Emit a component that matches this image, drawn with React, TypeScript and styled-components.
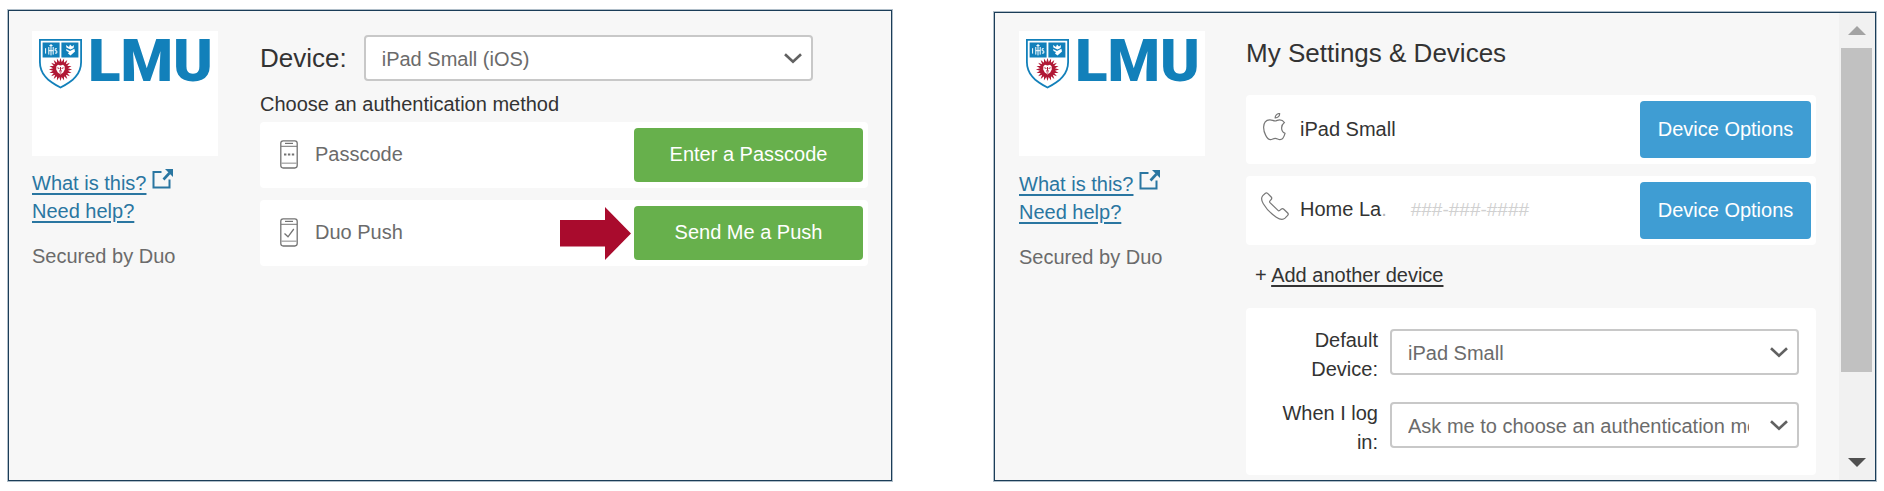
import React from "react";
import styled, { createGlobalStyle } from "styled-components";

const GlobalStyle = createGlobalStyle`
  *, *::before, *::after { box-sizing: border-box; }
  body {
    margin: 0;
    background: #fff;
    color: #333;
    font: 20px/28px "Liberation Sans", Arial, sans-serif;
  }
`;

const Page = styled.main`
  display: grid;
  grid-template-columns: minmax(0, 442fr) minmax(0, 441fr);
  gap: 102px;
  padding: 10px 8px;
`;

const Panel = styled.section<{ $lower?: boolean }>`
  display: flex;
  margin-top: ${(p) => (p.$lower ? 2 : 0)}px;
  border: 1px solid #1b3d58;
  box-shadow: 0 0 0 1px #b0bec9;
  background: #f7f7f7;
`;

const Body = styled.div<{ $inset: number; $gap: number; $top: number }>`
  flex: 1;
  min-width: 0;
  display: flex;
  gap: ${(p) => p.$gap}px;
  padding: ${(p) => p.$top}px 23px 5px ${(p) => p.$inset}px;
`;

const Sidebar = styled.aside`
  flex: none;
  width: 186px;
  display: flex;
  flex-direction: column;
  color: #6b6b6b;
`;

const LogoCard = styled.div`
  display: flex;
  align-items: flex-start;
  gap: 6px;
  height: 125px;
  padding: 8px 7px;
  background: #fff;
  > svg { flex: none; }
`;

const Wordmark = styled.span`
  color: #1280ba;
  font: 900 60px/44px Roboto, sans-serif;
`;

const HelpLinks = styled.nav<{ $space: number }>`
  display: flex;
  flex-direction: column;
  align-items: flex-start;
  margin: ${(p) => p.$space}px 0 17px;
`;

const HelpLink = styled.a`
  display: flex;
  gap: 6px;
  color: #2a76a1;
  text-underline-offset: 3px;
`;

const Content = styled.div<{ $top: number }>`
  flex: 1;
  min-width: 0;
  padding-top: ${(p) => p.$top}px;
`;

const DeviceBar = styled.div`
  display: flex;
  align-items: center;
  gap: 17px;
  padding-right: 55px;
`;

const DeviceLabel = styled.label`
  font-size: 26px;
  line-height: 32px;
`;

const SelectBox = styled.span`
  flex: 1;
  min-width: 0;
  display: grid;
  align-items: center;
  > * { grid-area: 1 / 1; }
  > svg {
    justify-self: end;
    margin-right: 11px;
    pointer-events: none;
  }
`;

const SelectInput = styled.select`
  appearance: none;
  width: 100%;
  height: 46px;
  padding: 2px 48px 0 16px;
  border: 2px solid #c8c8c8;
  border-radius: 4px;
  background: #fff;
  color: #6b6b6b;
  font: inherit;
`;

const Prompt = styled.h2`
  margin: 9px 0 4px;
  font: inherit;
`;

const Heading = styled.h1`
  margin: 0 0 26px;
  font-size: 26px;
  font-weight: 400;
  line-height: 32px;
`;

const Rows = styled.ul`
  display: flex;
  flex-direction: column;
  gap: 12px;
  margin: 0;
  padding: 0;
  list-style: none;
`;

const Row = styled.li<{ $kind: "method" | "device" }>`
  display: flex;
  align-items: center;
  gap: ${(p) => (p.$kind === "method" ? 17 : 11)}px;
  padding: 6px 5px 6px ${(p) => (p.$kind === "method" ? 20 : 15)}px;
  border-radius: 4px;
  background: #fff;
  color: ${(p) => (p.$kind === "method" ? "#6b6b6b" : "#333")};
  > svg { flex: none; }
`;

const RowName = styled.span`
  flex: 1;
  padding-bottom: 2px;
`;

const Masked = styled.span`
  margin-left: 24px;
  color: #d0d0d0;
  font-size: 19px;
`;

const Faint = styled.span`
  color: #b4b4b4;
`;

const ActionButton = styled.button<{ $tone: "green" | "blue" }>`
  width: ${(p) => (p.$tone === "green" ? 229 : 171)}px;
  height: ${(p) => (p.$tone === "green" ? 54 : 57)}px;
  padding: 0 0 2px;
  border: 0;
  border-radius: 4px;
  background: ${(p) => (p.$tone === "green" ? "#67b04c" : "#3f9dd3")};
  color: #fff;
  font: inherit;
`;

const PointerSlot = styled.span`
  display: flex;
  margin-right: -14px;
`;

const AddDevice = styled.p`
  margin: 16px 0 19px;
  padding-left: 9px;
`;

const AddLink = styled.a`
  color: inherit;
  text-underline-offset: 3px;
`;

const SettingsCard = styled.form`
  display: flex;
  flex-direction: column;
  gap: 15px;
  padding: 18px 17px 18px 20px;
  border-radius: 4px;
  background: #fff;
`;

const Field = styled.div`
  display: flex;
  align-items: flex-start;
  gap: 12px;
  > span { margin-top: 3px; }
`;

const FieldLabel = styled.label`
  flex: none;
  width: 112px;
  line-height: 29px;
  text-align: right;
`;

const Scrollbar = styled.div`
  flex: none;
  width: 36px;
  display: flex;
  flex-direction: column;
  background: #f1f1f1;
`;

const ScrollButton = styled.button`
  display: flex;
  align-items: center;
  justify-content: center;
  height: 35px;
  padding: 0;
  border: 0;
  background: none;
`;

const Track = styled.div`
  flex: 1;
  display: grid;
  grid-template-rows: 324fr 73fr;
  padding: 0 3px 0 2px;
`;

const Thumb = styled.div`
  background: #c1c1c1;
`;

const sunRays = Array.from({ length: 40 }, (_, i) => {
  const r = i % 2 ? 7.6 : 11.6;
  const a = (i * Math.PI) / 20;
  return `${(21.5 + r * Math.sin(a)).toFixed(2)},${(30.5 - r * Math.cos(a)).toFixed(2)}`;
}).join(" ");

function Shield() {
  return (
    <svg width="43" height="50" viewBox="0 0 43 50" aria-hidden="true">
      <path d="M0 0H43V23C43 35 35 43 21.5 49.5C8 43 0 35 0 23Z" fill="#1280ba" />
      <path d="M1.8 1.8H41.2V23C41.2 34 34 41.3 21.5 47.4C9 41.3 1.8 34 1.8 23Z" fill="#fff" />
      <path d="M3.6 3.6H20.6V18.4H3.6ZM22.4 3.6H39.4V18.4H22.4Z" fill="#1280ba" />
      <path
        d="M6.6 9.2V14.6M9.8 8V15.6M14.2 8V15.6M9.8 11.7H14.2M12 5V16.4M10.4 6.6H13.6M17.8 9.7H16.2V11.8H17.8V14.1H16"
        fill="none"
        stroke="#fff"
        strokeWidth="1"
      />
      <path
        d="M27 6L30 8L31 5.4L33 7.4L35 6L34.6 9L31.5 10.4L27.4 8.6ZM27 10L31 12L35.4 9.8L36 12.6L31.5 16.4L29 14.6L30 13L27.6 12Z"
        fill="#fff"
      />
      <polygon points={sunRays} fill="#b01835" />
      <path
        d="M17.4 27.2L19 25.8L21.5 26.6L24 25.8L25.6 27.2L25.8 30.4L24.2 33.6L21.5 35.4L18.8 33.6L17.200 30.4Z"
        fill="#fff"
      />
      <path
        d="M18.4 28.8L20.4 29.5M24.6 28.8L22.6 29.5M21.5 28V31.6M20 32H23M20.6 34H22.4"
        fill="none"
        stroke="#b01835"
        strokeWidth="1"
      />
    </svg>
  );
}

function ExternalIcon() {
  return (
    <svg width="21" height="20" viewBox="0 0 21 20" aria-hidden="true">
      <path d="M9.5 3H1.5V18.5H17.5V10.5" fill="none" stroke="currentColor" strokeWidth="2" />
      <path d="M11.5 10.5L17.5 4" fill="none" stroke="currentColor" strokeWidth="2.6" />
      <path d="M13 0H21V8Z" fill="currentColor" />
    </svg>
  );
}

function Chevron() {
  return (
    <svg width="18" height="11" viewBox="0 0 18 11" aria-hidden="true">
      <path d="M1 1.2L9 8.8L17 1.2" fill="none" stroke="#616161" strokeWidth="2.6" />
    </svg>
  );
}

function PhoneIcon({ checked }: { checked?: boolean }) {
  return (
    <svg width="18" height="31" viewBox="0 0 18 31" fill="none" stroke="#737373" aria-hidden="true">
      <rect x="0.8" y="0.8" width="16.4" height="27.2" rx="2.4" strokeWidth="1.3" />
      <path d="M1 6.3H17" />
      <path d="M1 23.2H17" stroke="#aaa" strokeWidth="1.4" />
      <path d="M5 3.4H13" strokeWidth="1.2" />
      {checked ? (
        <path d="M4.5 15.5L8 18.8L13.8 11" strokeWidth="1.3" />
      ) : (
        <path d="M4 14.5H6.4M7.9 14.5H10.3M11.8 14.5H14.2" strokeWidth="2.2" />
      )}
    </svg>
  );
}

function AppleIcon() {
  return (
    <svg width="28" height="34" viewBox="0 0 28 34" fill="none" stroke="#777" strokeWidth="1.2" aria-hidden="true">
      <path d="M14 8C12 7.700 10.500 6.800 8.500 6.800C5 6.800 2.600 10 2.600 14.200C2.600 19.500 6 26.600 9.400 26.600C11.400 26.600 12.200 25.300 14.200 25.300C16.200 25.300 17 26.600 19 26.600C21.200 26.600 23.200 23.400 24 20.300C21.800 19.300 20.600 17.400 20.600 14.900C20.600 12.500 21.800 10.700 23.400 9.500C22.200 7.700 20.400 6.800 18.600 6.800C16.800 6.800 15.600 8 14 8Z" />
      <path d="M14.200 5C14 2.400 16 .6 18.600 .5C18.800 3 17 5 14.200 5Z" />
    </svg>
  );
}

function HandsetIcon() {
  return (
    <svg width="28" height="38" viewBox="0 0 28 38" fill="none" stroke="#777" strokeWidth="1.2" aria-hidden="true">
      <path d="M1.800 3.600L4.400 1.200Q5.500 .4 6.600 1.400L10.200 5Q11.400 6.400 10 7.700L8.700 9.200Q8.400 10 9 10.700L17 18.400Q17.700 19.100 18.500 18.600L20.400 17Q21.600 16.100 22.800 17.200L26.700 21Q27.800 22.200 26.700 23.300L24 26.100C22 28 18.500 27.300 15.300 25.200C10 21.800 5 16.200 2.300 11.700C.5 8.700 .2 5.400 1.800 3.600Z" />
    </svg>
  );
}

function PointerArrow() {
  return (
    <svg width="71" height="53" viewBox="0 0 71 53" aria-hidden="true">
      <path d="M0 13H45V0L71 26.500L45 53V39.500H0Z" fill="#a90b2d" />
    </svg>
  );
}

function DuoSidebar({ space }: { space: number }) {
  return (
    <Sidebar>
      <LogoCard>
        <Shield />
        <Wordmark>LMU</Wordmark>
      </LogoCard>
      <HelpLinks $space={space}>
        <HelpLink href="#about">
          What is this?
          <ExternalIcon />
        </HelpLink>
        <HelpLink href="#help">Need help?</HelpLink>
      </HelpLinks>
      <span>Secured by Duo</span>
    </Sidebar>
  );
}

function Select({ id, option }: { id: string; option: string }) {
  return (
    <SelectBox>
      <SelectInput id={id}>
        <option>{option}</option>
      </SelectInput>
      <Chevron />
    </SelectBox>
  );
}

export default function App() {
  return (
    <>
      <GlobalStyle />
      <Page>
        <Panel>
          <Body $inset={23} $gap={42} $top={20}>
            <DuoSidebar space={13} />
            <Content $top={4}>
              <DeviceBar>
                <DeviceLabel htmlFor="device">Device:</DeviceLabel>
                <Select id="device" option="iPad Small (iOS)" />
              </DeviceBar>
              <Prompt>Choose an authentication method</Prompt>
              <Rows>
                <Row $kind="method">
                  <PhoneIcon />
                  <RowName>Passcode</RowName>
                  <ActionButton $tone="green">Enter a Passcode</ActionButton>
                </Row>
                <Row $kind="method">
                  <PhoneIcon checked />
                  <RowName>Duo Push</RowName>
                  <PointerSlot>
                    <PointerArrow />
                  </PointerSlot>
                  <ActionButton $tone="green">Send Me a Push</ActionButton>
                </Row>
              </Rows>
            </Content>
          </Body>
        </Panel>

        <Panel $lower>
          <Body $inset={24} $gap={41} $top={18}>
            <DuoSidebar space={14} />
            <Content $top={6}>
              <Heading>My Settings &amp; Devices</Heading>
              <Rows>
                <Row $kind="device">
                  <AppleIcon />
                  <RowName>iPad Small</RowName>
                  <ActionButton $tone="blue">Device Options</ActionButton>
                </Row>
                <Row $kind="device">
                  <HandsetIcon />
                  <RowName>
                    Home La<Faint>.</Faint>
                    <Masked>###-###-####</Masked>
                  </RowName>
                  <ActionButton $tone="blue">Device Options</ActionButton>
                </Row>
              </Rows>
              <AddDevice>
                + <AddLink href="#add">Add another device</AddLink>
              </AddDevice>
              <SettingsCard>
                <Field>
                  <FieldLabel htmlFor="default-device">Default Device:</FieldLabel>
                  <Select id="default-device" option="iPad Small" />
                </Field>
                <Field>
                  <FieldLabel htmlFor="login-action">When I log in:</FieldLabel>
                  <Select id="login-action" option="Ask me to choose an authentication method" />
                </Field>
              </SettingsCard>
            </Content>
          </Body>
          <Scrollbar>
            <ScrollButton aria-label="Scroll up">
              <svg width="18" height="9" viewBox="0 0 18 9">
                <path d="M0 9L9 0L18 9Z" fill="#a3a3a3" />
              </svg>
            </ScrollButton>
            <Track>
              <Thumb />
            </Track>
            <ScrollButton aria-label="Scroll down">
              <svg width="18" height="9" viewBox="0 0 18 9">
                <path d="M0 0H18L9 9Z" fill="#505050" />
              </svg>
            </ScrollButton>
          </Scrollbar>
        </Panel>
      </Page>
    </>
  );
}
